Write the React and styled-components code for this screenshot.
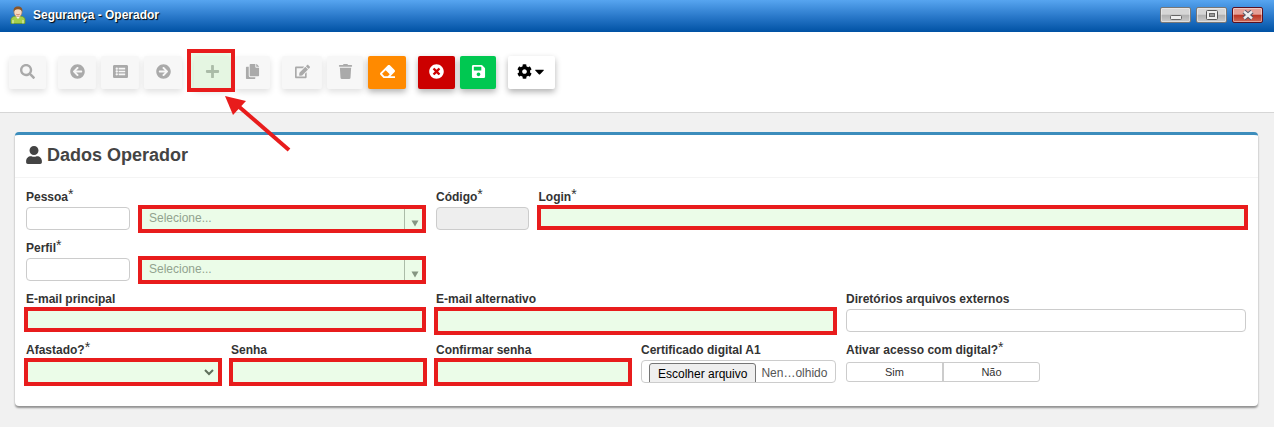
import React, { useRef, useState } from "react";
import styled, { createGlobalStyle, css } from "styled-components";
import {
  FaArrowCircleLeft,
  FaArrowCircleRight,
  FaCaretDown,
  FaCog,
  FaCopy,
  FaEdit,
  FaEraser,
  FaListAlt,
  FaPlus,
  FaSave,
  FaSearch,
  FaTimesCircle,
  FaTrash,
  FaUser,
} from "react-icons/fa";

const GlobalStyle = createGlobalStyle`
  * {
    box-sizing: border-box;
  }

  body {
    margin: 0;
    background: #f1f1f1;
    color: #333;
    font-family: "Liberation Sans", Arial, sans-serif;
    font-size: 12px;
  }

  button, input, select {
    font: inherit;
  }
`;

const TitleBar = styled.header`
  display: flex;
  align-items: center;
  height: 32px;
  padding: 0 11px 3px 10px;
  background: linear-gradient(#57a5f0, #2b7acb 50%, #0052a4);
`;

const WindowTitle = styled.h1`
  flex: 1;
  margin: 0 0 0 7px;
  color: #fff;
  font-size: 12px;
  line-height: 16px;
  text-shadow: 1px 1px 1px #000;
`;

const WindowButtons = styled.div`
  display: flex;
  gap: 5px;
`;

const WindowButton = styled.button`
  display: flex;
  align-items: center;
  justify-content: center;
  width: 31px;
  height: 16px;
  padding: 0;
  border: 1px solid ${({ $danger }) => ($danger ? "#5a1020" : "#777")};
  border-radius: 2px;
  box-shadow: inset 0 0 0 1px rgba(255, 255, 255, 0.4);
  background: ${({ $danger }) =>
    $danger
      ? "linear-gradient(#e5a097 45%, #bb3322 50%, #cf6a58)"
      : "linear-gradient(#d6d6d6 45%, #b0b0b0 50%, #cacaca)"};
`;

const Toolbar = styled.nav`
  display: flex;
  flex-wrap: wrap;
  gap: 12px;
  padding: 24px 9px 23px;
  border-bottom: 1px solid #d6d6d6;
  background: #fff;
`;

const ButtonGroup = styled.div`
  display: flex;
  gap: 5px;
`;

const tones = {
  plain: css`
    background: #f7f7f7;
    color: #aaa;
    box-shadow: 0 3px 6px rgba(0, 0, 0, 0.12);
  `,
  orange: css`
    background: #ff8a00;
    color: #fff;
  `,
  red: css`
    background: #cc0000;
    color: #fff;
  `,
  green: css`
    background: #00c851;
    color: #fff;
  `,
  white: css`
    background: #fff;
    color: #000;
  `,
};

const ToolButton = styled.button`
  display: flex;
  align-items: center;
  justify-content: center;
  width: ${({ $width }) => $width || 37}px;
  height: 33px;
  padding: 0 0 2px;
  border: 0;
  border-radius: 2px;
  font-size: 15px;
  box-shadow: 0 3px 6px rgba(0, 0, 0, 0.3);
  ${({ $tone }) => tones[$tone || "plain"]}
`;

const Marked = styled.div`
  position: relative;
  flex: 1;
  min-width: 0;

  &::after {
    content: "";
    position: absolute;
    inset: ${({ $inset }) => $inset || "-2px -1px -3px -2px"};
    border: 4px solid #e81c1c;
    background: rgba(175, 243, 163, 0.25);
    pointer-events: none;
  }
`;

const Pointer = styled.svg`
  position: absolute;
  top: 39px;
  left: 31px;
  z-index: 1;
  pointer-events: none;
`;

const Card = styled.section`
  margin: 19px 16px 20px 15px;
  border-top: 3px solid #3c8dbc;
  border-radius: 4px;
  background: #fff;
  box-shadow: 0 2px 2px rgba(0, 0, 0, 0.4);
`;

const CardTitle = styled.h2`
  display: flex;
  align-items: center;
  gap: 4px;
  height: 43px;
  margin: 0;
  padding: 0 10px 2px;
  border-bottom: 1px solid #f4f4f4;
  color: #444;
  font-size: 18px;
`;

const Form = styled.form`
  display: grid;
  grid-template-columns: repeat(12, minmax(0, 1fr));
  gap: 9px 10px;
  padding: 10px 12px 23px 11px;
`;

const Field = styled.div`
  grid-column: ${({ $start }) => $start || "auto"} / span ${({ $span }) => $span};
`;

const Label = styled.label`
  display: block;
  height: 19px;
  font-weight: bold;
  line-height: 19px;
  white-space: nowrap;
`;

const Star = styled.sup`
  font-size: 14px;
  font-weight: normal;
  line-height: 0;
  vertical-align: 2px;
`;

const Controls = styled.div`
  display: flex;
  gap: 9px;
`;

const control = css`
  display: block;
  width: 100%;
  height: 23px;
  border: 1px solid #ccc;
  border-radius: 4px;
  background: #fff;
  color: #555;
`;

const Input = styled.input`
  ${control}
  padding: 2px 8px;

  &:disabled {
    background: #eee;
  }
`;

const CodeInput = styled(Input)`
  width: 26%;
`;

const Select = styled.select`
  ${control}
  appearance: none;
  padding: 0 24px 1px 9px;
`;

const SearchSelect = styled(Select)`
  color: #888;
`;

const SelectArrow = styled.span`
  position: absolute;
  top: 1px;
  right: 2px;
  bottom: 0;
  display: flex;
  align-items: center;
  justify-content: center;
  width: 20px;
  pointer-events: none;
`;

const SearchArrow = styled(SelectArrow)`
  padding-top: 8px;
  border-left: 1px solid #aaa;
`;

const hiddenInput = css`
  position: absolute;
  width: 1px;
  height: 1px;
  margin: 0;
  opacity: 0;
`;

const FileBox = styled.div`
  ${control}
  display: flex;
  gap: 5px;
  padding: 2px 7px 0;
  overflow: hidden;
  white-space: nowrap;
  line-height: 20px;
`;

const FileInput = styled.input`
  ${hiddenInput}
`;

const FileButton = styled.button`
  height: 22px;
  padding: 0 8px 1px;
  border: 1px solid #767676;
  border-radius: 3px;
  background: #efefef;
  color: #000;
`;

const Toggle = styled.div`
  display: flex;
  width: 194px;
  height: 20px;
  margin-top: 2px;
  border: 1px solid #ccc;
  border-radius: 3px;
  background: #fff;
`;

const ToggleOption = styled.label`
  flex: 1;
  color: #333;
  font-size: 11px;
  line-height: 18px;
  text-align: center;

  & + & {
    border-left: 2px solid #ccc;
  }
`;

const ToggleInput = styled.input`
  ${hiddenInput}
`;

function AvatarIcon() {
  return (
    <svg width="16" height="18" viewBox="0 0 16 18" aria-hidden="true">
      <path d="M1 17.5v-4c0-2 2-3 4-3.300h6c2 .3 4 1.300 4 3.300v4z" fill="#a5cf4a" stroke="#6c9a22" strokeWidth=".7" />
      <path d="M5.500 10l2.500 3 2.500-3z" fill="#fff" />
      <path d="M3 14v3.500M13 14v3.500" stroke="#e6f3c4" />
      <ellipse cx="8" cy="6" rx="4" ry="4.800" fill="#f8d9bd" stroke="#b98250" strokeWidth=".6" />
      <path d="M3.800 6C3 2 5 .5 8 .5s5 1.500 4.200 5.500c-.7-2-1.500-2.800-4.200-2.800S4.500 4 3.800 6z" fill="#8a5527" />
      <path d="M6.300 8.300q1.700 1.200 3.400 0" fill="none" stroke="#b5523b" strokeWidth=".7" />
    </svg>
  );
}

function MinimizeIcon() {
  return (
    <svg width="14" height="12" viewBox="0 0 14 12">
      <rect x="1.500" y="6.500" width="11" height="4" rx="1" fill="#eee" stroke="#666" />
    </svg>
  );
}

function MaximizeIcon() {
  return (
    <svg width="12" height="10" viewBox="0 0 12 10">
      <rect x=".5" y=".5" width="11" height="9" rx="1" fill="#eee" stroke="#555" />
      <rect x="3.500" y="3.500" width="5" height="3" fill="#999" stroke="#666" />
    </svg>
  );
}

function CloseIcon() {
  return (
    <svg width="12" height="10" viewBox="0 0 12 10">
      <path d="M2 1.500l8 7M10 1.500l-8 7" stroke="#555566" strokeWidth="4.500" />
      <path d="M2 1.500l8 7M10 1.500l-8 7" stroke="#eee" strokeWidth="2.400" />
    </svg>
  );
}

function FieldLabel({ htmlFor, text, required }) {
  return (
    <Label htmlFor={htmlFor}>
      {text}
      {required && <Star>*</Star>}
    </Label>
  );
}

function LookupField({ id, label }) {
  return (
    <Field $span={4}>
      <FieldLabel htmlFor={id} text={label} required />
      <Controls>
        <CodeInput id={id} type="text" />
        <Marked $inset="-2px 0 -3px -1px">
          <SearchSelect aria-label={label} defaultValue="">
            <option value="">Selecione...</option>
          </SearchSelect>
          <SearchArrow>
            <svg width="8" height="7" viewBox="0 0 8 7">
              <path d="M.5.5h7L4 6.500z" fill="#777" />
            </svg>
          </SearchArrow>
        </Marked>
      </Controls>
    </Field>
  );
}

function App() {
  const fileInput = useRef(null);
  const [fileName, setFileName] = useState("Nen…olhido");

  const handleFile = (event) => {
    const file = event.target.files[0];
    if (file) {
      setFileName(file.name);
    }
  };

  return (
    <>
      <GlobalStyle />
      <TitleBar>
        <AvatarIcon />
        <WindowTitle>Segurança - Operador</WindowTitle>
        <WindowButtons>
          <WindowButton type="button" aria-label="Minimizar">
            <MinimizeIcon />
          </WindowButton>
          <WindowButton type="button" aria-label="Maximizar">
            <MaximizeIcon />
          </WindowButton>
          <WindowButton type="button" aria-label="Fechar" $danger>
            <CloseIcon />
          </WindowButton>
        </WindowButtons>
      </TitleBar>

      <Toolbar>
        <ButtonGroup>
          <ToolButton type="button" aria-label="Pesquisar">
            <FaSearch />
          </ToolButton>
        </ButtonGroup>
        <ButtonGroup>
          <ToolButton type="button" aria-label="Anterior" $width={38}>
            <FaArrowCircleLeft />
          </ToolButton>
          <ToolButton type="button" aria-label="Lista" $width={38}>
            <FaListAlt />
          </ToolButton>
          <ToolButton type="button" aria-label="Próximo" $width={38}>
            <FaArrowCircleRight />
          </ToolButton>
        </ButtonGroup>
        <ButtonGroup>
          <Marked $inset="-7px -5px -3px -7px">
            <ToolButton type="button" aria-label="Novo" $width={36}>
              <FaPlus />
            </ToolButton>
            <Pointer width="68" height="60" viewBox="0 0 68 60">
              <path d="M12 10l52 45" stroke="#e81c1c" strokeWidth="4" />
              <path d="M0 1l21 5L8 20z" fill="#e81c1c" />
            </Pointer>
          </Marked>
          <ToolButton type="button" aria-label="Copiar" $width={35}>
            <FaCopy />
          </ToolButton>
        </ButtonGroup>
        <ButtonGroup>
          <ToolButton type="button" aria-label="Editar" $width={40}>
            <FaEdit />
          </ToolButton>
          <ToolButton type="button" aria-label="Excluir" $width={36}>
            <FaTrash />
          </ToolButton>
          <ToolButton type="button" aria-label="Limpar" $tone="orange" $width={38}>
            <FaEraser />
          </ToolButton>
        </ButtonGroup>
        <ButtonGroup>
          <ToolButton type="button" aria-label="Cancelar" $tone="red">
            <FaTimesCircle />
          </ToolButton>
          <ToolButton type="button" aria-label="Salvar" $tone="green" $width={36}>
            <FaSave />
          </ToolButton>
        </ButtonGroup>
        <ButtonGroup>
          <ToolButton type="button" aria-label="Opções" $tone="white" $width={47}>
            <FaCog />
            <FaCaretDown />
          </ToolButton>
        </ButtonGroup>
      </Toolbar>

      <Card>
        <CardTitle>
          <FaUser />
          Dados Operador
        </CardTitle>
        <Form>
          <LookupField id="pessoa" label="Pessoa" />
          <Field $span={1}>
            <FieldLabel htmlFor="codigo" text="Código" required />
            <Input id="codigo" type="text" disabled />
          </Field>
          <Field $span={7}>
            <FieldLabel htmlFor="login" text="Login" required />
            <Marked $inset="-2px -2px 0">
              <Input id="login" type="text" />
            </Marked>
          </Field>

          <LookupField id="perfil" label="Perfil" />

          <Field $start={1} $span={4}>
            <FieldLabel htmlFor="email" text="E-mail principal" />
            <Marked $inset="-2px 0 0 -2px">
              <Input id="email" type="email" />
            </Marked>
          </Field>
          <Field $span={4}>
            <FieldLabel htmlFor="email-alternativo" text="E-mail alternativo" />
            <Marked>
              <Input id="email-alternativo" type="email" />
            </Marked>
          </Field>
          <Field $span={4}>
            <FieldLabel htmlFor="diretorios" text="Diretórios arquivos externos" />
            <Input id="diretorios" type="text" />
          </Field>

          <Field $span={2}>
            <FieldLabel htmlFor="afastado" text="Afastado?" required />
            <Marked>
              <Select id="afastado" defaultValue="">
                <option value="" aria-label="Vazio" />
                <option value="S">Sim</option>
                <option value="N">Não</option>
              </Select>
              <SelectArrow>
                <svg width="10" height="7" viewBox="0 0 10 7">
                  <path d="M1 1l4 4 4-4" fill="none" stroke="#444" strokeWidth="2" />
                </svg>
              </SelectArrow>
            </Marked>
          </Field>
          <Field $span={2}>
            <FieldLabel htmlFor="senha" text="Senha" />
            <Marked>
              <Input id="senha" type="password" />
            </Marked>
          </Field>
          <Field $span={2}>
            <FieldLabel htmlFor="confirmar-senha" text="Confirmar senha" />
            <Marked>
              <Input id="confirmar-senha" type="password" />
            </Marked>
          </Field>
          <Field $span={2}>
            <FieldLabel htmlFor="certificado" text="Certificado digital A1" />
            <FileBox>
              <FileInput id="certificado" type="file" ref={fileInput} onChange={handleFile} />
              <FileButton type="button" onClick={() => fileInput.current.click()}>
                Escolher arquivo
              </FileButton>
              <span>{fileName}</span>
            </FileBox>
          </Field>
          <Field $span={4}>
            <FieldLabel htmlFor="digital-sim" text="Ativar acesso com digital?" required />
            <Toggle role="radiogroup" aria-label="Ativar acesso com digital?">
              <ToggleOption>
                <ToggleInput id="digital-sim" type="radio" name="digital" value="S" />
                Sim
              </ToggleOption>
              <ToggleOption>
                <ToggleInput type="radio" name="digital" value="N" />
                Não
              </ToggleOption>
            </Toggle>
          </Field>
        </Form>
      </Card>
    </>
  );
}

export default App;
